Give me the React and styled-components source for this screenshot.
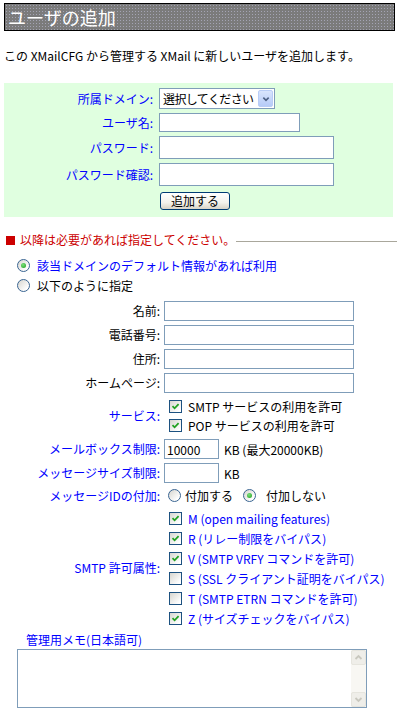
import React from 'react';
import styled, { createGlobalStyle } from 'styled-components';

const GlobalStyle = createGlobalStyle`
  body {
    margin: 0;
    padding: 3px 4px 0;
    background: #fff;
    color: #000;
    font-family: "Noto Sans CJK JP", sans-serif;
    font-size: 12px;
  }
`;

const Title = styled.h1`
  margin: 0 -2px 0 0;
  height: 26px;
  padding-left: 3px;
  border: 1px solid #000;
  background-color: #7b7b7b;
  background-image: radial-gradient(#a4a4b4 32%, transparent 36%);
  background-size: 3px 3px;
  color: #fff;
  font-size: 18px;
  font-weight: normal;
  line-height: 26px;
`;

const Intro = styled.p`
  margin: 17px 0 19px;
  line-height: 16px;
`;

const MainForm = styled.div`
  display: grid;
  grid-template-columns: 151px auto;
  column-gap: 4px;
  row-gap: 4px;
  align-items: center;
  padding: 5px 0 7px;
  background: #e0ffe0;
`;

const Label = styled.div`
  text-align: right;
  padding-right: 2px;
  color: ${p => p.$color || '#0000ff'};
  line-height: 16px;
  white-space: nowrap;
`;

const Field = styled.div`
  display: flex;
  align-items: center;
  min-height: ${p => p.$h || 0}px;
`;

const TextInput = styled.input`
  box-sizing: border-box;
  width: ${p => p.$w}px;
  height: ${p => p.$h || 20}px;
  margin: 0;
  padding: 0 2px;
  border: 1px solid #7f9db9;
  background: #fff;
  font: inherit;
  font-size: 12px;
  outline: none;
`;

const SelectWrap = styled.div`
  position: relative;
  width: 116px;
  height: 21px;
`;

const Select = styled.select`
  box-sizing: border-box;
  width: 100%;
  height: 100%;
  margin: 0;
  padding: 0 0 0 3px;
  border: 1px solid #7f9db9;
  background: #fff;
  font: inherit;
  font-size: 12px;
  letter-spacing: -0.6px;
  appearance: none;
  outline: none;
`;

const SelectArrow = styled.span`
  position: absolute;
  top: 2px;
  right: 2px;
  width: 15px;
  height: 17px;
  box-sizing: border-box;
  border: 1px solid #b9cdf6;
  border-radius: 2px;
  background: linear-gradient(#d9e5fd, #b6cbf7);
  display: flex;
  align-items: center;
  justify-content: center;
  pointer-events: none;
`;

const SubmitButton = styled.button`
  width: 70px;
  height: 18px;
  margin: 2px 0 0 1px;
  padding: 0;
  border: 1px solid #003c74;
  border-radius: 3px;
  background: linear-gradient(#ffffff, #f3f2ec 60%, #d8d3c6);
  color: #000;
  font: inherit;
  font-size: 12px;
  line-height: 16px;
`;

const Notice = styled.div`
  display: flex;
  align-items: center;
  margin: 15px -4px 7px 2px;
  color: #cc0000;
  line-height: 16px;

  &::before {
    content: '';
    width: 9px;
    height: 9px;
    margin-right: 5px;
    background: #cc0000;
  }

  &::after {
    content: '';
    flex: 1;
    height: 1px;
    margin: 2px 0 0 1px;
    background: #a9a79c;
  }
`;

const ChoiceLine = styled.label`
  display: flex;
  align-items: center;
  gap: 7px;
  height: 20px;
  padding-left: 13px;
  color: ${p => p.$color || '#000'};
`;

const RadioMark = styled.span`
  flex: none;
  box-sizing: border-box;
  width: 13px;
  height: 13px;
  border: 1px solid #3a6592;
  border-radius: 50%;
  background: linear-gradient(135deg, #d6d5cf, #ffffff 80%);
  display: inline-flex;
  align-items: center;
  justify-content: center;

  &::after {
    content: '';
    width: 5px;
    height: 5px;
    border-radius: 50%;
    background: ${p => (p.$on ? 'radial-gradient(circle at 40% 35%, #7be07b, #1e9e1e)' : 'transparent')};
  }
`;

const CheckMark = styled.span`
  flex: none;
  box-sizing: border-box;
  width: 13px;
  height: 13px;
  border: 1px solid #1c5180;
  background: linear-gradient(135deg, #d6d5cf, #ffffff 85%);
  display: inline-flex;
  align-items: center;
  justify-content: center;
`;

const Details = styled.div`
  display: grid;
  grid-template-columns: 158px auto;
  column-gap: 2px;
  row-gap: 4px;
  align-items: center;
  margin-top: 6px;
`;

const CheckList = styled.div`
  display: flex;
  flex-direction: column;
`;

const CheckLine = styled.label`
  display: flex;
  align-items: center;
  gap: 6px;
  height: ${p => p.$h}px;
  padding-left: 5px;
  color: ${p => p.$color || '#000'};
  white-space: nowrap;
`;

const Unit = styled.span`
  margin-left: 5px;
`;

const RadioGroup = styled.div`
  display: flex;
  align-items: center;
  gap: 4px;
  height: 17px;
  padding-left: 4px;

  & > span + span + span {
    margin-left: 6px;
  }
`;

const MemoLabel = styled.div`
  margin-top: 4px;
  padding-left: 22px;
  color: #0000ff;
  line-height: 16px;
`;

const MemoBox = styled.div`
  display: flex;
  box-sizing: border-box;
  width: 350px;
  height: 59px;
  margin: 1px 0 0 13px;
  border: 1px solid #7f9db9;
  background: #fff;
`;

const MemoText = styled.textarea`
  flex: 1;
  margin: 0;
  padding: 2px;
  border: 0;
  resize: none;
  outline: none;
  font: inherit;
  font-size: 12px;
`;

const ScrollBar = styled.div`
  width: 15px;
  display: flex;
  flex-direction: column;
  justify-content: space-between;
  background: #f8f7f3;
`;

const ScrollButton = styled.span`
  box-sizing: border-box;
  height: 15px;
  border: 1px solid #e6e5de;
  border-radius: 2px;
  background: #efeee9;
  display: flex;
  align-items: center;
  justify-content: center;
`;

const Radio = ({ on }) => <RadioMark $on={on} />;

const Check = ({ on }) => (
  <CheckMark>
    {on && (
      <svg width="9" height="9" viewBox="0 0 9 9">
        <path d="M1.5 4.2 L3.6 6.3 L7.6 2.2" fill="none" stroke="#21a121" strokeWidth="1.8" />
      </svg>
    )}
  </CheckMark>
);

const Chevron = ({ up, color, size = 9 }) => (
  <svg width={size} height={size} viewBox="0 0 9 9">
    <path
      d={up ? 'M1.5 6 L4.5 3 L7.5 6' : 'M1.5 3 L4.5 6 L7.5 3'}
      fill="none"
      stroke={color}
      strokeWidth="1.8"
    />
  </svg>
);

const smtpFlags = [
  { text: 'M (open mailing features)', on: true },
  { text: 'R (リレー制限をバイパス)', on: true },
  { text: 'V (SMTP VRFY コマンドを許可)', on: true },
  { text: 'S (SSL クライアント証明をバイパス)', on: false },
  { text: 'T (SMTP ETRN コマンドを許可)', on: false },
  { text: 'Z (サイズチェックをバイパス)', on: true },
];

const App = () => {
  return (
    <>
      <GlobalStyle />
      <Title>ユーザの追加</Title>
      <Intro>この XMailCFG から管理する XMail に新しいユーザを追加します。</Intro>

      <MainForm>
        <Label>所属ドメイン:</Label>
        <Field>
          <SelectWrap>
            <Select defaultValue="">
              <option value="">選択してください</option>
            </Select>
            <SelectArrow>
              <Chevron color="#4d6185" size={8} />
            </SelectArrow>
          </SelectWrap>
        </Field>
        <Label>ユーザ名:</Label>
        <Field>
          <TextInput $w={141} $h={19} />
        </Field>
        <Label>パスワード:</Label>
        <Field>
          <TextInput type="password" $w={175} $h={23} />
        </Field>
        <Label>パスワード確認:</Label>
        <Field>
          <TextInput type="password" $w={175} $h={23} />
        </Field>
        <div />
        <Field>
          <SubmitButton>追加する</SubmitButton>
        </Field>
      </MainForm>

      <Notice>以降は必要があれば指定してください。</Notice>

      <ChoiceLine $color="#0000ff">
        <Radio on />
        該当ドメインのデフォルト情報があれば利用
      </ChoiceLine>
      <ChoiceLine>
        <Radio />
        以下のように指定
      </ChoiceLine>

      <Details>
        <Label $color="#000">名前:</Label>
        <Field><TextInput $w={190} /></Field>
        <Label $color="#000">電話番号:</Label>
        <Field><TextInput $w={190} /></Field>
        <Label $color="#000">住所:</Label>
        <Field><TextInput $w={190} /></Field>
        <Label $color="#000">ホームページ:</Label>
        <Field><TextInput $w={190} /></Field>

        <Label>サービス:</Label>
        <CheckList>
          <CheckLine $h={19}><Check on />SMTP サービスの利用を許可</CheckLine>
          <CheckLine $h={19}><Check on />POP サービスの利用を許可</CheckLine>
        </CheckList>

        <Label>メールボックス制限:</Label>
        <Field>
          <TextInput $w={55} defaultValue="10000" />
          <Unit>KB (最大20000KB)</Unit>
        </Field>
        <Label>メッセージサイズ制限:</Label>
        <Field>
          <TextInput $w={55} />
          <Unit>KB</Unit>
        </Field>

        <Label>メッセージIDの付加:</Label>
        <RadioGroup>
          <Radio />
          <span>付加する</span>
          <Radio on />
          <span>付加しない</span>
        </RadioGroup>

        <Label>SMTP 許可属性:</Label>
        <CheckList>
          {smtpFlags.map(flag => (
            <CheckLine key={flag.text} $h={20} $color="#0000ff">
              <Check on={flag.on} />
              {flag.text}
            </CheckLine>
          ))}
        </CheckList>
      </Details>

      <MemoLabel>管理用メモ(日本語可)</MemoLabel>
      <MemoBox>
        <MemoText />
        <ScrollBar>
          <ScrollButton><Chevron up color="#c9c8bf" /></ScrollButton>
          <ScrollButton><Chevron color="#c9c8bf" /></ScrollButton>
        </ScrollBar>
      </MemoBox>
    </>
  );
};

export default App;
